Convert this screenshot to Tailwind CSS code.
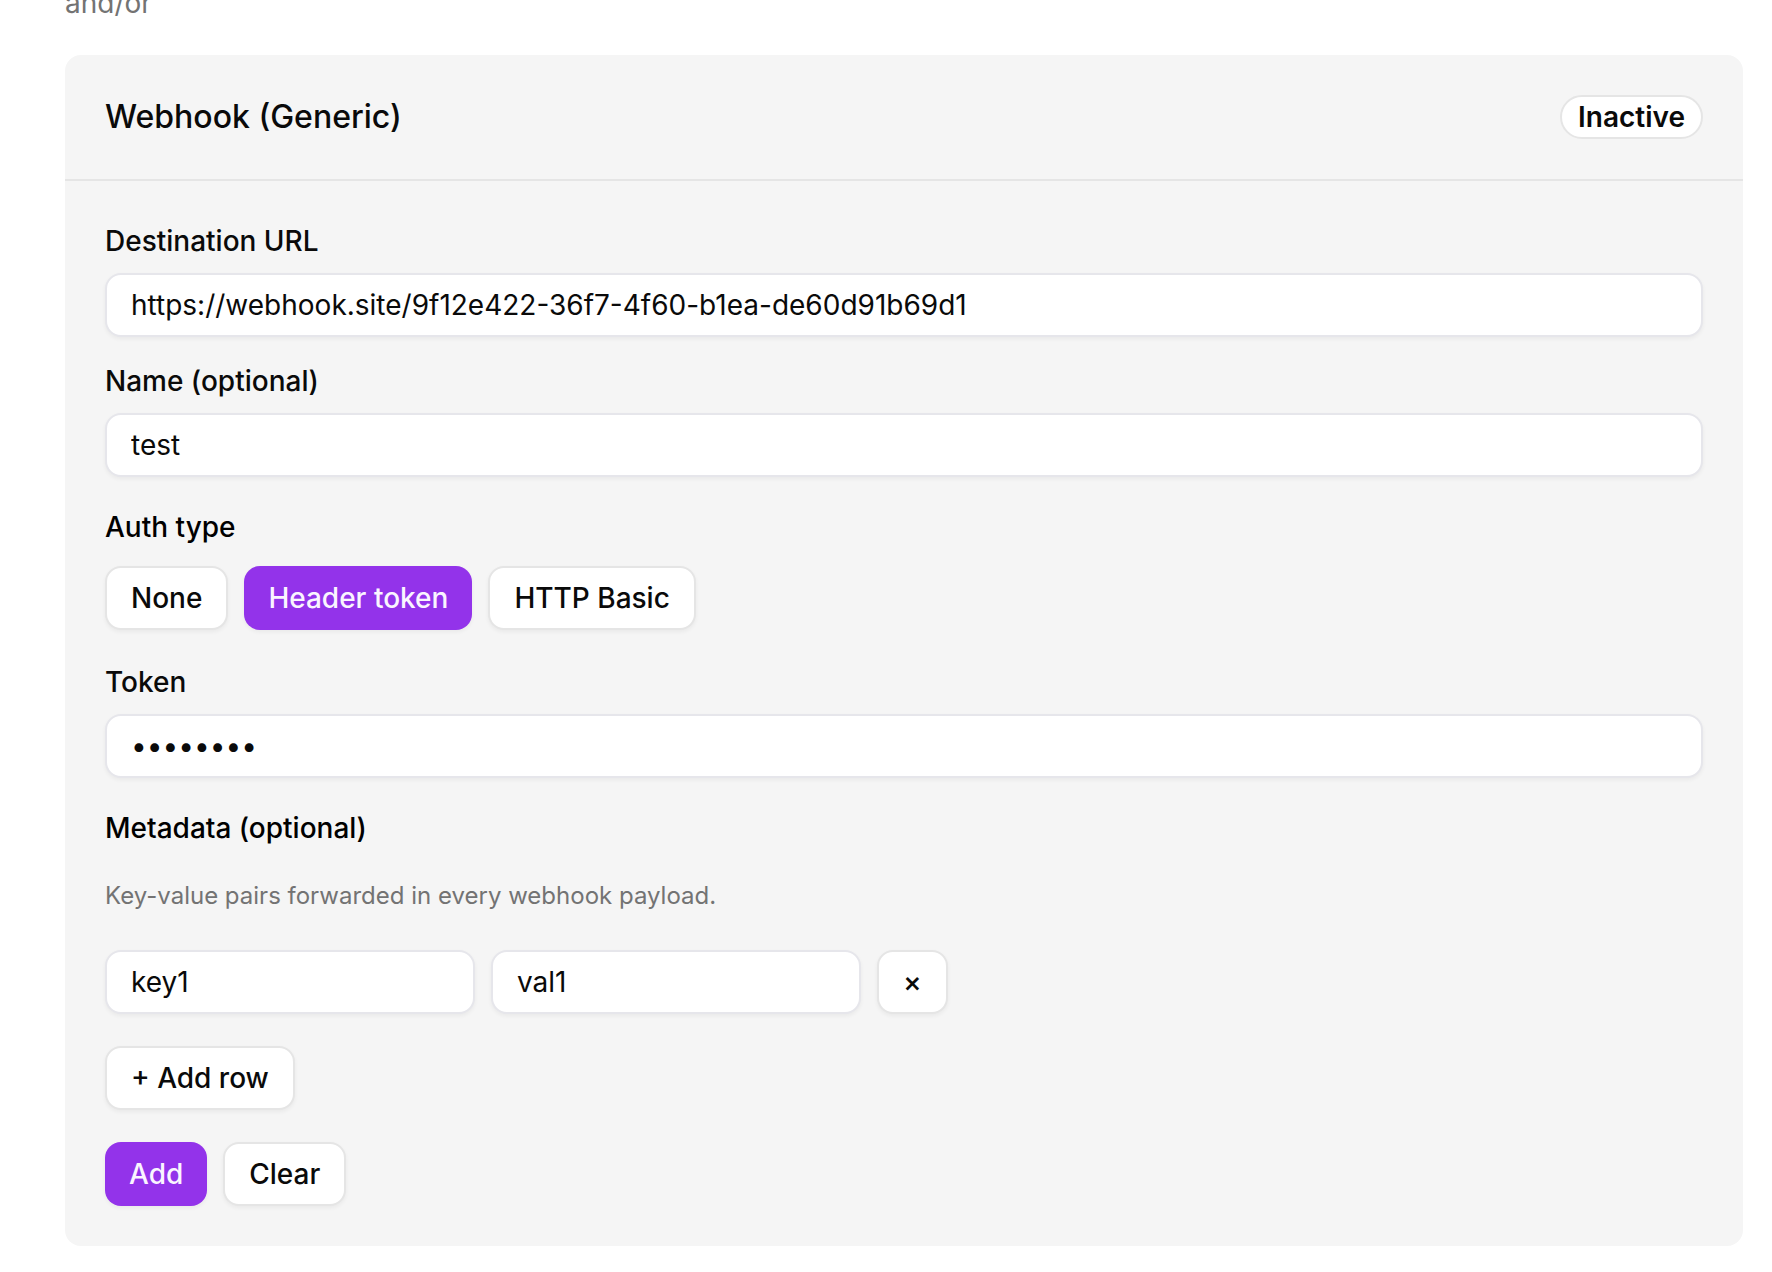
<!DOCTYPE html>
<html lang="en">
<head>
    <meta charset="UTF-8">
    <meta name="viewport" content="width=device-width, initial-scale=1.0">
    <title>Webhook (Generic)</title>
    <script src="https://cdn.jsdelivr.net/npm/@tailwindcss/browser@4"></script>
    <style>
        body {
            font-family: 'Inter', sans-serif;
            -webkit-font-smoothing: antialiased;
        }
    </style>
</head>
<body class="bg-white text-[28px] leading-10 text-neutral-950 overflow-hidden">
    <main class="pl-[65px] pr-[29px]">
        <p class="-mt-[17px] mb-8 text-neutral-500">and/or</p>

        <section class="bg-neutral-100 rounded-2xl">
            <header class="flex items-center justify-between p-10 border-b-2 border-neutral-200">
                <h2 class="text-[32px] leading-10 font-medium">Webhook (Generic)</h2>
                <span class="bg-white border-2 border-neutral-200 rounded-full px-4 font-semibold">Inactive</span>
            </header>

            <form class="p-10">
                <div class="space-y-6">
                    <div>
                        <label for="url" class="block mb-3 font-medium">Destination URL</label>
                        <input type="text" id="url" name="url" value="https://webhook.site/9f12e422-36f7-4f60-b1ea-de60d91b69d1"
                            class="block w-full h-16 px-6 bg-white border-2 border-[#e6e6eb] rounded-2xl shadow-[0_2px_4px_rgba(0,0,0,0.05)] focus:outline-none">
                    </div>
                    <div>
                        <label for="name" class="block mb-3 font-medium">Name (optional)</label>
                        <input type="text" id="name" name="name" value="test"
                            class="block w-full h-16 px-6 bg-white border-2 border-[#e6e6eb] rounded-2xl shadow-[0_2px_4px_rgba(0,0,0,0.05)] focus:outline-none">
                    </div>
                </div>

                <!-- Auth type -->
                <fieldset class="mt-8">
                    <legend class="mb-[21px] leading-9 font-medium text-black">Auth type</legend>
                    <div class="flex gap-4">
                        <button type="button" class="h-16 px-6 bg-white border-2 border-neutral-200 rounded-2xl shadow-[0_2px_4px_rgba(0,0,0,0.05)] font-medium">None</button>
                        <button type="button" class="h-16 px-6 bg-[#9333ea] rounded-2xl shadow-[0_2px_4px_rgba(0,0,0,0.05)] font-medium text-purple-50">Header token</button>
                        <button type="button" class="h-16 px-6 bg-white border-2 border-neutral-200 rounded-2xl shadow-[0_2px_4px_rgba(0,0,0,0.05)] font-medium">HTTP Basic</button>
                    </div>
                </fieldset>

                <div class="mt-8">
                    <label for="token" class="block mb-3 font-medium">Token</label>
                    <input type="password" id="token" name="token" value="abcdefgh"
                        class="block w-full h-16 px-6 bg-white border-2 border-[#e6e6eb] rounded-2xl shadow-[0_2px_4px_rgba(0,0,0,0.05)] focus:outline-none">
                </div>

                <!-- Metadata -->
                <fieldset class="mt-8">
                    <legend class="leading-9 font-medium text-black">Metadata (optional)</legend>
                    <p class="mt-8 mb-9 text-[24px] leading-9 text-neutral-500">Key-value pairs forwarded in every webhook payload.</p>
                    <div class="flex gap-4">
                        <input type="text" name="key" value="key1" aria-label="Key"
                            class="w-[370px] h-16 px-6 bg-white border-2 border-[#e6e6eb] rounded-2xl shadow-[0_2px_4px_rgba(0,0,0,0.05)] focus:outline-none">
                        <input type="text" name="value" value="val1" aria-label="Value"
                            class="w-[370px] h-16 px-6 bg-white border-2 border-[#e6e6eb] rounded-2xl shadow-[0_2px_4px_rgba(0,0,0,0.05)] focus:outline-none">
                        <button type="button" aria-label="Remove row" class="h-16 px-6 bg-white border-2 border-neutral-200 rounded-2xl shadow-[0_2px_4px_rgba(0,0,0,0.05)] font-medium">×</button>
                    </div>
                    <button type="button" class="mt-8 h-16 px-6 bg-white border-2 border-neutral-200 rounded-2xl shadow-[0_2px_4px_rgba(0,0,0,0.05)] font-medium">+ Add row</button>
                </fieldset>

                <div class="mt-8 flex gap-4">
                    <button type="submit" class="h-16 px-6 bg-[#9333ea] rounded-2xl shadow-[0_2px_4px_rgba(0,0,0,0.05)] font-medium text-purple-50">Add</button>
                    <button type="reset" class="h-16 px-6 bg-white border-2 border-neutral-200 rounded-2xl shadow-[0_2px_4px_rgba(0,0,0,0.05)] font-medium">Clear</button>
                </div>
            </form>
        </section>
    </main>
</body>
</html>
